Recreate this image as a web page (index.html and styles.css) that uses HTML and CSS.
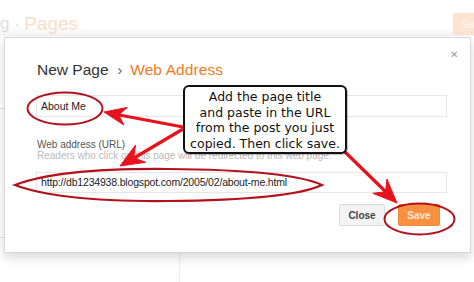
FILE: index.html
```html
<!DOCTYPE html>
<html>
<head>
<meta charset="utf-8">
<link rel="stylesheet" href="styles.css">
</head>
<body>
<div class="page">
  <header class="topbar">
    <div class="crumb"><span class="blog">g</span><span class="dot">·</span><span class="pages">Pages</span></div>
    <div class="ghost-btn">Sa</div>
  </header>
  <div class="sidebar-line one"></div>
  <div class="sidebar-line two"></div>
  <div class="below-line"></div>
</div>

<div class="modal">
  <span class="close-x">&#x2715;</span>
  <h1 class="title"><span class="t1">New Page</span><span class="sep">›</span><span class="t2">Web Address</span></h1>
  <div class="field title-field">About Me</div>
  <div class="label">Web address (URL)</div>
  <div class="help">Readers who click on this page will be redirected to this web page.</div>
  <div class="field url-field">http://db1234938.blogspot.com/2005/02/about-me.html</div>
  <div class="actions">
    <button class="btn close">Close</button>
    <button class="btn save">Save</button>
  </div>
</div>

<svg class="marks" width="474" height="282" viewBox="0 0 474 282">
  <ellipse cx="65" cy="108.5" rx="37.5" ry="16" fill="none" stroke="#b3121c" stroke-width="2"/>
  <path d="M15 185 Q 60 168 168 169 Q 290 170 322 185 Q 290 200 168 201 Q 60 202 15 185 Z" fill="none" stroke="#b3121c" stroke-width="2.2"/>
  <ellipse cx="419.5" cy="219" rx="35" ry="15.5" fill="none" stroke="#b3121c" stroke-width="2"/>
  <g fill="#e8121c" stroke="#e8121c" stroke-linejoin="round">
    <line x1="183" y1="127" x2="118" y2="114.7" stroke-width="3.2"/>
    <polygon points="104,112 127.3,107.4 118.7,114.8 123.9,125" stroke-width="1"/>
    <line x1="183" y1="129" x2="134" y2="158" stroke-width="3.2"/>
    <polygon points="120,166 135.5,145.1 133.7,157.8 145.7,162.3" stroke-width="1"/>
    <line x1="344" y1="151" x2="387" y2="193" stroke-width="3.2"/>
    <polygon points="397,203 386.9,179.1 385.6,191.8 372.9,193.3" stroke-width="1"/>
  </g>
</svg>

<div class="callout">Add the page title<br>and paste in the URL<br>from the post you just<br>copied. Then click save.</div>
</body>
</html>
```

FILE: styles.css
```css
html, body {
  margin: 0;
  padding: 0;
  background: #fff;
  width: 474px;
  height: 282px;
  overflow: hidden;
  font-family: Arial, "Liberation Sans", sans-serif;
}

.page {
  position: relative;
  width: 474px;
  height: 282px;
}

.topbar {
  display: flex;
  justify-content: space-between;
  align-items: flex-start;
  height: 36px;
  box-sizing: border-box;
  padding-top: 13px;
  background: linear-gradient(#fff 0, #fff 27px, #f2f2f2 36px);
}

.crumb {
  display: flex;
  align-items: center;
  gap: 5px;
  margin-left: 0;
  font-size: 19px;
  line-height: 22px;
}

.blog { color: #dedede; font-size: 17px; }
.dot { color: #d4d4d4; font-size: 14px; }
.pages { color: #fcdcc6; }

.ghost-btn {
  width: 21px;
  height: 22px;
  background: #fde4d2;
  color: #fff3ea;
  font-size: 11px;
  font-weight: bold;
  line-height: 22px;
  padding-left: 8px;
  box-sizing: border-box;
  overflow: hidden;
}

.sidebar-line {
  position: absolute;
  left: 0;
  width: 4px;
  height: 1px;
  background: #e6e6e6;
}
.sidebar-line.one { top: 108px; }
.sidebar-line.two { top: 237px; }

.below-line {
  position: absolute;
  left: 179px;
  top: 252px;
  width: 1px;
  height: 30px;
  background: #ececec;
}

.modal {
  position: absolute;
  left: 4px;
  top: 37px;
  width: 467px;
  height: 216px;
  box-sizing: border-box;
  background: #fff;
  border: 1px solid #d6d6d6;
  box-shadow: 0 5px 10px rgba(0,0,0,0.15);
  padding: 22px 23px 0 31px;
}

.close-x {
  position: absolute;
  right: 12px;
  top: 11px;
  font-size: 10px;
  color: #9a9a9a;
}

.title {
  margin: 0;
  font-weight: normal;
  font-size: 15.5px;
  line-height: 20px;
  padding-left: 1px;
  display: flex;
  align-items: center;
}
.t1 { color: #333; }
.sep { color: #555; margin: 0 8px 0 9px; font-size: 14px; }
.t2 { color: #ee7b22; letter-spacing: 0.1px; }

.field {
  height: 22px;
  box-sizing: border-box;
  border: 1px solid #e6e6e6;
  font-size: 10.5px;
  line-height: 20px;
  color: #222;
  padding-left: 4px;
}

.title-field { margin-top: 15px; }

.label {
  margin-top: 21px;
  font-size: 10px;
  line-height: 13px;
  color: #555;
  padding-left: 1px;
}

.help {
  margin-top: -2px;
  font-size: 10px;
  line-height: 13px;
  color: #b9b9b9;
  padding-left: 1px;
}

.url-field {
  margin-top: 10px;
  height: 21px;
  line-height: 19px;
  letter-spacing: -0.18px;
}

.actions {
  display: flex;
  justify-content: flex-end;
  gap: 13px;
  margin-top: 11px;
  margin-right: 7px;
}

.btn {
  height: 22px;
  box-sizing: border-box;
  font-family: Arial, "Liberation Sans", sans-serif;
  font-weight: bold;
  font-size: 10px;
  padding: 0;
  border-radius: 2px;
}
.btn.close {
  width: 46px;
  background: #f3f3f3;
  border: 1px solid #dcdcdc;
  color: #444;
}
.btn.save {
  width: 42px;
  background: #f8913f;
  border: 1px solid #f08a38;
  color: #fde6d3;
}

.marks {
  position: absolute;
  left: 0;
  top: 0;
}

.callout {
  position: absolute;
  left: 183px;
  top: 85px;
  width: 164px;
  height: 69px;
  box-sizing: border-box;
  border: 2px solid #111;
  border-radius: 6px;
  background: #fff;
  box-shadow: 1px 1px 1px rgba(0,0,0,0.25);
  text-align: center;
  font-family: "DejaVu Sans", sans-serif;
  font-size: 12.5px;
  line-height: 15.5px;
  padding-top: 2px;
  color: #111;
  white-space: nowrap;
}
```
